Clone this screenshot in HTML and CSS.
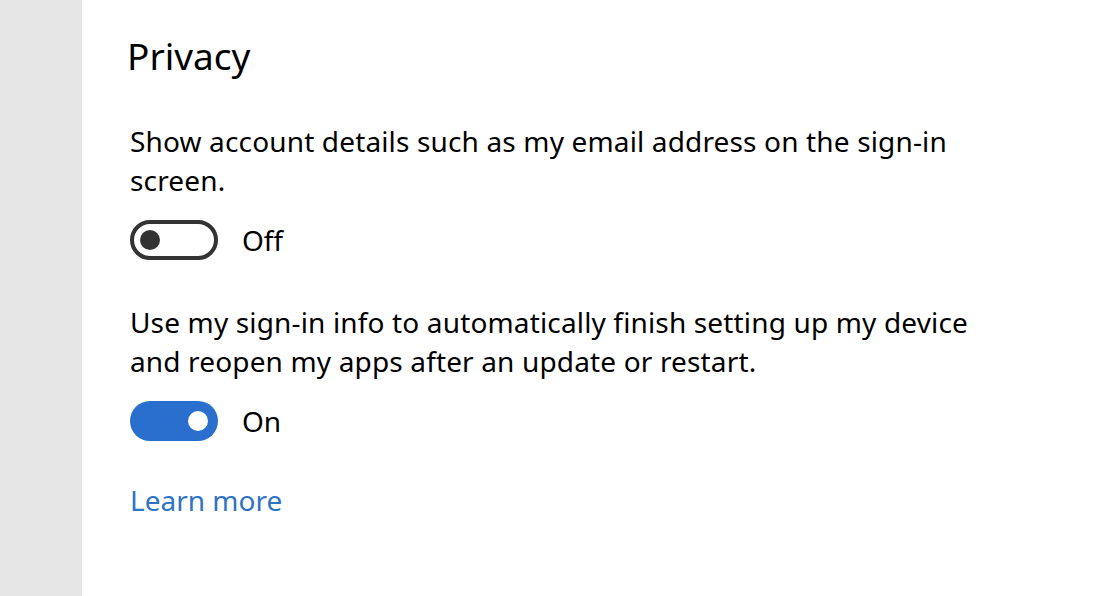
FILE: index.html
```html
<!DOCTYPE html>
<html>
<head>
<meta charset="utf-8">
<link rel="stylesheet" href="styles.css">
</head>
<body>
<div class="page">
  <aside class="sidebar"></aside>
  <main class="content">
    <h1 class="title">Privacy</h1>
    <p class="desc">Show account details such as my email address on the sign-in screen.</p>
    <div class="setting">
      <span class="toggle toggle-off"><span class="knob"></span></span>
      <span class="state">Off</span>
    </div>
    <p class="desc desc-second">Use my sign-in info to automatically finish setting up my device and reopen my apps after an update or restart.</p>
    <div class="setting">
      <span class="toggle toggle-on"><span class="knob"></span></span>
      <span class="state">On</span>
    </div>
    <a class="link" href="#">Learn more</a>
  </main>
</div>
</body>
</html>
```
FILE: styles.css
```css
html, body {
  margin: 0;
  padding: 0;
  background: #ffffff;
}
body {
  font-family: "Noto Sans", "Open Sans", sans-serif;
  color: #000000;
}
.page {
  display: flex;
  width: 1104px;
  height: 596px;
  overflow: hidden;
}
.sidebar {
  width: 82px;
  flex: 0 0 82px;
  background: #e6e6e6;
}
.content {
  flex: 1;
  padding-left: 48px;
  display: flex;
  flex-direction: column;
  align-items: flex-start;
}
.title {
  font-size: 37px;
  font-weight: 400;
  line-height: 52px;
  margin: 30px 0 0 -3px;
}
.desc {
  font-size: 28px;
  letter-spacing: 0.15px;
  line-height: 39px;
  margin: 40px 0 0 0;
  width: 850px;
}
.desc-second {
  margin-top: 43px;
}
.setting {
  display: flex;
  align-items: center;
  gap: 24px;
  margin-top: 20px;
  height: 40px;
}
.toggle {
  box-sizing: border-box;
  width: 88px;
  height: 40px;
  border-radius: 20px;
  display: flex;
  align-items: center;
}
.toggle-off {
  border: 4px solid #333333;
  padding-left: 6px;
}
.toggle-on {
  background: #2b6fce;
  justify-content: flex-end;
  padding-right: 10px;
}
.knob {
  width: 20px;
  height: 20px;
  border-radius: 50%;
}
.toggle-off .knob {
  background: #333333;
}
.toggle-on .knob {
  background: #ffffff;
}
.state {
  font-size: 28px;
  line-height: 40px;
}
.link {
  font-size: 28px;
  line-height: 39px;
  color: #2f73c5;
  text-decoration: none;
  margin-top: 40px;
}
```
